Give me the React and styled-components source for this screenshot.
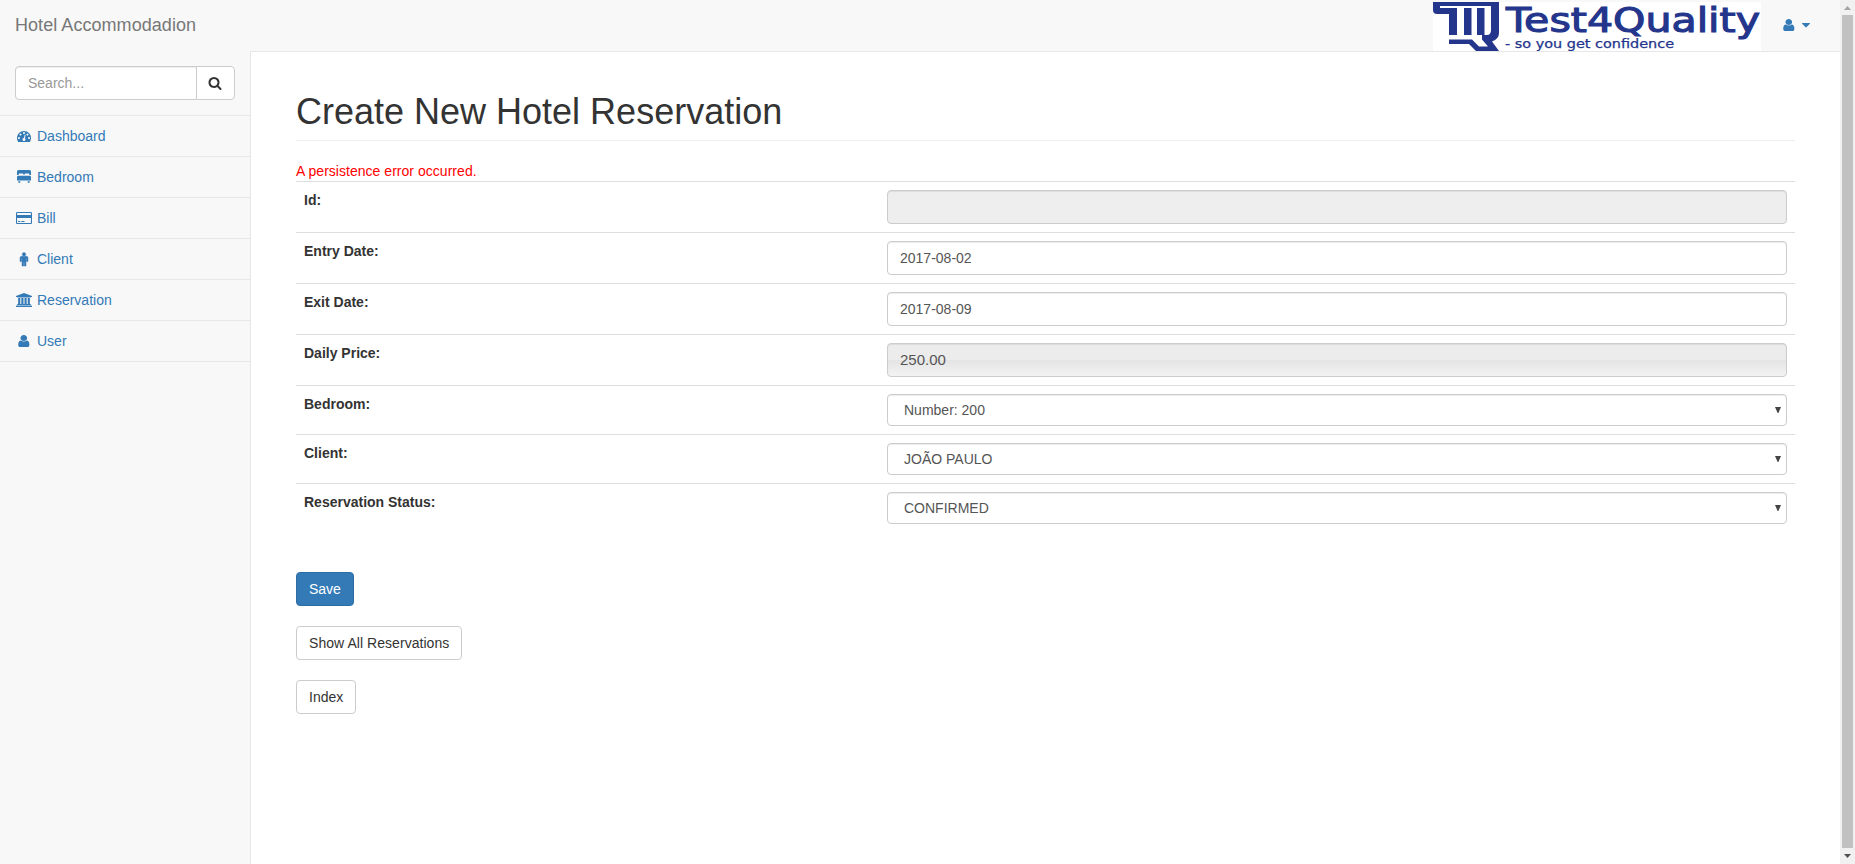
import React from 'react';
import styled, { createGlobalStyle, css } from 'styled-components';

const GlobalStyle = createGlobalStyle`
  *, *::before, *::after { box-sizing: border-box; }
  html, body { margin: 0; padding: 0; overflow: hidden; }
  body {
    font-family: "Liberation Sans", Arial, sans-serif;
    font-size: 14px;
    line-height: 20px;
    color: #333;
    background: #fff;
  }
  input, select, button { font-family: inherit; }
`;

const Window = styled.div`
  display: flex;
  height: 864px;
`;

const Page = styled.div`
  flex: 1;
  min-width: 0;
  display: flex;
  flex-direction: column;
  background: #f8f8f8;
`;

const Navbar = styled.header`
  display: flex;
  height: 51px;
  justify-content: space-between;
`;

const Brand = styled.a`
  padding: 15px;
  height: 50px;
  font-size: 18px;
  line-height: 20px;
  letter-spacing: 0.05px;
  color: #777;
`;

const NavRight = styled.div`
  display: flex;
  padding-right: 15px;
`;

const LogoBox = styled.div`
  width: 328px;
  height: 49px;
  margin: 2px 4px 0 0;
  background: #fff;
  svg { display: block; overflow: visible; }
`;

const UserMenu = styled.a`
  display: flex;
  align-items: center;
  gap: 4px;
  height: 50px;
  padding: 0 15px;
  color: #337ab7;
`;

const Body = styled.div`
  flex: 1;
  display: flex;
  min-height: 0;
`;

const Sidebar = styled.nav`
  width: 250px;
`;

const SearchRow = styled.div`
  display: flex;
  padding: 15px;
  border-bottom: 1px solid #e7e7e7;
`;

const fieldStyle = css`
  width: 100%;
  height: 34px;
  padding: 6px 12px;
  font-size: 14px;
  line-height: 20px;
  color: #555;
  background: #fff;
  border: 1px solid #ccc;
  border-radius: 4px;
  box-shadow: inset 0 1px 1px rgba(0, 0, 0, 0.075);
  outline: none;
`;

const SearchInput = styled.input`
  ${fieldStyle}
  flex: 1;
  min-width: 0;
  border-radius: 4px 0 0 4px;
  &::placeholder { color: #999; opacity: 1; }
`;

const SearchButton = styled.button`
  display: flex;
  align-items: center;
  justify-content: center;
  width: 39px;
  height: 34px;
  margin-left: -1px;
  padding: 0 1px 0 0;
  color: #333;
  background: #fff;
  border: 1px solid #ccc;
  border-radius: 0 4px 4px 0;
`;

const MenuItem = styled.a`
  display: flex;
  align-items: center;
  gap: 4px;
  height: 41px;
  padding: 0 15px;
  color: #337ab7;
  border-bottom: 1px solid #e7e7e7;
`;

const IconSlot = styled.span`
  display: flex;
  justify-content: center;
  width: ${(p) => p.$width || 18}px;
  svg { display: block; flex: none; overflow: visible; }
`;

const Content = styled.main`
  flex: 1;
  padding: 0 45px;
  background: #fff;
  border-left: 1px solid #e7e7e7;
  border-top: 1px solid #e7e7e7;
`;

const Title = styled.h1`
  margin: 40px 0 20px;
  padding-bottom: 9px;
  font-size: 36px;
  font-weight: 500;
  line-height: 39px;
  border-bottom: 1px solid #eee;
`;

const ErrorText = styled.div`
  height: 20px;
  letter-spacing: 0.03px;
  color: red;
`;

const Table = styled.div`
  margin-bottom: 40px;
`;

const Row = styled.div`
  display: grid;
  grid-template-columns: 583px 1fr;
  border-top: 1px solid #ddd;
`;

const Cell = styled.div`
  padding: 8px;
`;

const Label = styled.label`
  font-weight: 700;
`;

const TextField = styled.input`
  ${fieldStyle}
  display: block;
  ${(p) => p.$disabled && 'background: #eee;'}
  ${(p) => p.$shaded && `
    padding: 5px 12px 7px;
    font-size: 15px;
    background: linear-gradient(#ececec 0, #ececec 50%, #e4e4e4 50%, #f3f3f3 100%);
  `}
`;

const SelectBox = styled.div`
  position: relative;
  svg {
    position: absolute;
    right: 6px;
    top: 13px;
    pointer-events: none;
  }
`;

const Select = styled.select`
  ${fieldStyle}
  display: block;
  height: 32px;
  padding: 5px 16px;
  appearance: none;
`;

const Actions = styled.div`
  display: flex;
  flex-direction: column;
  align-items: flex-start;
  gap: 20px;
`;

const Button = styled.button`
  height: 34px;
  padding: 6px 12px;
  font-size: 14px;
  line-height: 20px;
  letter-spacing: ${(p) => (p.$wide ? '0.05px' : 'normal')};
  border-radius: 4px;
  border: 1px solid ${(p) => (p.$primary ? '#2e6da4' : '#ccc')};
  background: ${(p) => (p.$primary ? '#337ab7' : '#fff')};
  color: ${(p) => (p.$primary ? '#fff' : '#333')};
`;

const Scrollbar = styled.div`
  display: flex;
  flex-direction: column;
  align-items: center;
  width: 15px;
  background: #f1f1f1;
`;

const ScrollArrow = styled.div`
  display: flex;
  align-items: center;
  justify-content: center;
  height: ${(p) => p.$height}px;
`;

const Thumb = styled.div`
  flex: 1;
  width: 11px;
  background: #c1c1c1;
`;

const PATHS = {
  user: 'M1536 1399q0 109-62.5 187t-150.5 78h-854q-88 0-150.5-78t-62.5-187q0-85 8.5-160.5t31.5-152 58.5-131 94-89 134.5-34.5q131 128 313 128t313-128q76 0 134.5 34.5t94 89 58.5 131 31.5 152 8.5 160.5zm-256-887q0 159-112.5 271.5t-271.5 112.5-271.5-112.5-112.5-271.5 112.5-271.5 271.5-112.5 271.5 112.5 112.5 271.5z',
  search: 'M1216 832q0-185-131.5-316.5t-316.5-131.5-316.5 131.5-131.5 316.5 131.5 316.5 316.5 131.5 316.5-131.5 131.5-316.5zm512 832q0 52-38 90t-90 38q-54 0-90-38l-343-342q-179 124-399 124-143 0-273.5-55.5t-225-150-150-225-55.5-273.5 55.5-273.5 150-225 225-150 273.5-55.5 273.5 55.5 225 150 150 225 55.5 273.5q0 220-124 399l343 343q37 37 37 90z',
  dashboard: 'M384 1152q0-53-37.5-90.5t-90.5-37.5-90.5 37.5-37.5 90.5 37.5 90.5 90.5 37.5 90.5-37.5 37.5-90.5zm192-448q0-53-37.5-90.5t-90.5-37.5-90.5 37.5-37.5 90.5 37.5 90.5 90.5 37.5 90.5-37.5 37.5-90.5zm428 481l101-382q6-26-7.5-48.5t-38.5-29.5-48 6.5-30 39.5l-101 382q-60 5-107 43.5t-63 98.5q-20 77 20 146t117 89 146-20 89-117q16-60-6-117t-72-91zm660-33q0-53-37.5-90.5t-90.5-37.5-90.5 37.5-37.5 90.5 37.5 90.5 90.5 37.5 90.5-37.5 37.5-90.5zm-640-640q0-53-37.5-90.5t-90.5-37.5-90.5 37.5-37.5 90.5 37.5 90.5 90.5 37.5 90.5-37.5 37.5-90.5zm448 192q0-53-37.5-90.5t-90.5-37.5-90.5 37.5-37.5 90.5 37.5 90.5 90.5 37.5 90.5-37.5 37.5-90.5zm320 448q0 261-141 483-19 29-54 29h-1402q-35 0-54-29-141-221-141-483 0-182 71-348t191-286 286-191 348-71 348 71 286 191 191 286 71 348z',
  bed: 'M0 640V200Q0 0 200 0H1592Q1792 0 1792 200V640H1600V560L1500 440H1060L960 520V600H832V520L732 440H292L192 560V640ZM0 880Q0 720 160 720H1632Q1792 720 1792 880V1350H0ZM128 1450H420V1620H200ZM1372 1450H1664L1592 1620H1372Z',
  card: 'M1760 128q66 0 113 47t47 113v1216q0 66-47 113t-113 47h-1600q-66 0-113-47t-47-113v-1216q0-66 47-113t113-47h1600zm-1600 128q-13 0-22.5 9.5t-9.5 22.5v224h1664v-224q0-13-9.5-22.5t-22.5-9.5h-1600zm1600 1280q13 0 22.5-9.5t9.5-22.5v-608h-1664v608q0 13 9.5 22.5t22.5 9.5h1600zm-1504-128v-128h256v128h-256zm384 0v-128h384v128h-384z',
  male: 'M1408 736v416q0 40-28 68t-68 28-68-28-28-68v-352h-64v912q0 46-33 79t-79 33-79-33-33-79v-464h-64v464q0 46-33 79t-79 33-79-33-33-79v-912h-64v352q0 40-28 68t-68 28-68-28-28-68v-416q0-80 56-136t136-56h640q80 0 136 56t56 136zm-288-448q0 93-65.5 158.5t-158.5 65.5-158.5-65.5-65.5-158.5 65.5-158.5 158.5-65.5 158.5 65.5 65.5 158.5z',
  bank: 'M960 0l960 384v128h-128q0 26-20.5 45t-48.5 19h-1526q-28 0-48.5-19t-20.5-45h-128v-128zm-704 640h256v768h128v-768h256v768h128v-768h256v768h128v-768h256v768h59q28 0 48.5 19t20.5 45v64h-1664v-64q0-26 20.5-45t48.5-19h59v-768zm1595 960q28 0 48.5 19t20.5 45v128h-1920v-128q0-26 20.5-45t48.5-19h1782z',
  caret: 'M1408 704q0 26-19 45l-448 448q-19 19-45 19t-45-19l-448-448q-19-19-19-45t19-45 45-19h896q26 0 45 19t19 45z',
};

function Icon({ name, units = 1792, width = units / 128, slot, weight = 0 }) {
  return (
    <IconSlot $width={slot}>
      <svg
        width={width}
        height="14"
        viewBox={`0 0 ${units} 1792`}
        preserveAspectRatio="none"
        fill="currentColor"
        stroke="currentColor"
        strokeWidth={weight}
      >
        <path d={PATHS[name]} />
      </svg>
    </IconSlot>
  );
}

const LOGO_FONT = '"DejaVu Sans", sans-serif';

function Logo() {
  return (
    <svg width="328" height="49" viewBox="0 0 328 49" fill="#24358c">
      <path d="M0 0H66V4H7V6H24V33H16V12H4Q0 12 0 8Z" />
      <path d="M31 6H38.5V33H31ZM44 6H51.5V33H44ZM58 4H66V31Q66 37 59 39.5L66 49H43L36 42H16V37.5H39L46 44.5H55L49 37.5V33H54Q58 33 58 28Z" />
      <text x="73" y="30" fontFamily={LOGO_FONT} fontSize="33" stroke="#24358c" strokeWidth="1.1" textLength="254" lengthAdjust="spacingAndGlyphs">Test4Quality</text>
      <text x="72" y="46" fontFamily={LOGO_FONT} fontSize="12" stroke="#24358c" strokeWidth="0.25" textLength="169" lengthAdjust="spacingAndGlyphs">- so you get confidence</text>
    </svg>
  );
}

const MENU = [
  { label: 'Dashboard', icon: 'dashboard' },
  { label: 'Bedroom', icon: 'bed' },
  { label: 'Bill', icon: 'card', units: 1920, width: 16 },
  { label: 'Client', icon: 'male', weight: 60 },
  { label: 'Reservation', icon: 'bank', units: 1920, width: 16 },
  { label: 'User', icon: 'user', width: 15.6 },
];

const FIELDS = [
  { label: 'Id:', value: '', disabled: true },
  { label: 'Entry Date:', value: '2017-08-02' },
  { label: 'Exit Date:', value: '2017-08-09' },
  { label: 'Daily Price:', value: '250.00', shaded: true },
  { label: 'Bedroom:', value: 'Number: 200', select: true },
  { label: 'Client:', value: 'JOÃO PAULO', select: true },
  { label: 'Reservation Status:', value: 'CONFIRMED', select: true },
];

function Field({ value, select, disabled, shaded }) {
  if (!select) {
    return <TextField defaultValue={value} readOnly={disabled || shaded} $disabled={disabled} $shaded={shaded} />;
  }
  return (
    <SelectBox>
      <Select defaultValue={value}>
        <option>{value}</option>
      </Select>
      <svg width="6" height="6" viewBox="0 0 6 6" fill="#444">
        <path d="M0 0H6L3.4 6H2.6Z" />
      </svg>
    </SelectBox>
  );
}

export default function App() {
  return (
    <>
      <GlobalStyle />
      <Window>
        <Page>
          <Navbar>
            <Brand>Hotel Accommodadion</Brand>
            <NavRight>
              <LogoBox><Logo /></LogoBox>
              <UserMenu>
                <Icon name="user" width={15.6} />
                <Icon name="caret" slot={8} />
              </UserMenu>
            </NavRight>
          </Navbar>
          <Body>
            <Sidebar>
              <SearchRow>
                <SearchInput placeholder="Search..." />
                <SearchButton aria-label="Search"><Icon name="search" slot={13} /></SearchButton>
              </SearchRow>
              {MENU.map((m) => (
                <MenuItem key={m.label}>
                  <Icon name={m.icon} units={m.units} width={m.width} weight={m.weight} />
                  {m.label}
                </MenuItem>
              ))}
            </Sidebar>
            <Content>
              <Title>Create New Hotel Reservation</Title>
              <ErrorText>A persistence error occurred.</ErrorText>
              <Table>
                {FIELDS.map((f) => (
                  <Row key={f.label}>
                    <Cell><Label>{f.label}</Label></Cell>
                    <Cell><Field {...f} /></Cell>
                  </Row>
                ))}
              </Table>
              <Actions>
                <Button $primary>Save</Button>
                <Button $wide>Show All Reservations</Button>
                <Button>Index</Button>
              </Actions>
            </Content>
          </Body>
        </Page>
        <Scrollbar>
          <ScrollArrow $height={15}>
            <svg width="7" height="4" viewBox="0 0 7 4" fill="#a3a3a3"><path d="M0 4L3.5 0L7 4Z" /></svg>
          </ScrollArrow>
          <Thumb />
          <ScrollArrow $height={16}>
            <svg width="7" height="4" viewBox="0 0 7 4" fill="#505050"><path d="M0 0H7L3.5 4Z" /></svg>
          </ScrollArrow>
        </Scrollbar>
      </Window>
    </>
  );
}
